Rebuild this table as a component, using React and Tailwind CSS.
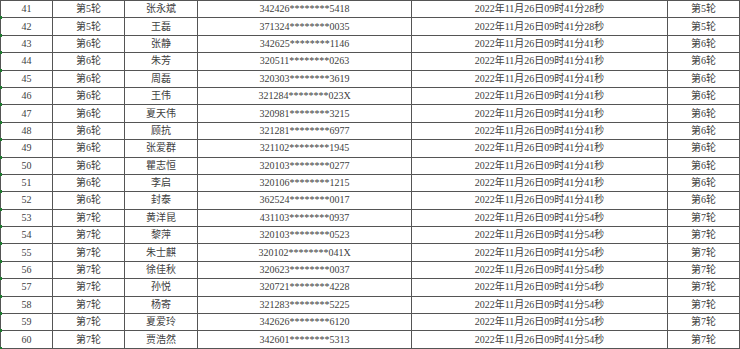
import React from "react";

const rows = [
  [41, 5, "张永斌", "342426********5418", "28"],
  [42, 5, "王磊", "371324********0035", "28"],
  [43, 6, "张静", "342625********1146", "41"],
  [44, 6, "朱芳", "320511********0263", "41"],
  [45, 6, "周磊", "320303********3619", "41"],
  [46, 6, "王伟", "321284********023X", "41"],
  [47, 6, "夏天伟", "320981********3215", "41"],
  [48, 6, "顾抗", "321281********6977", "41"],
  [49, 6, "张爱群", "321102********1945", "41"],
  [50, 6, "瞿志恒", "320103********0277", "41"],
  [51, 6, "李启", "320106********1215", "41"],
  [52, 6, "封泰", "362524********0017", "41"],
  [53, 7, "黄洋昆", "431103********0937", "54"],
  [54, 7, "黎萍", "320103********0523", "54"],
  [55, 7, "朱士麒", "320102********041X", "54"],
  [56, 7, "徐佳秋", "320623********0037", "54"],
  [57, 7, "孙悦", "320721********4228", "54"],
  [58, 7, "杨寄", "321283********5225", "54"],
  [59, 7, "夏爱玲", "342626********6120", "54"],
  [60, 7, "贾浩然", "342601********5313", "54"],
];

export default function App() {
  // 成绩表
  return (
    <div
      className="w-[740px] h-[349px] bg-white overflow-hidden text-[#404040] text-[10px]"
      style={{ fontFamily: '"Liberation Serif", "Noto Sans CJK SC", serif' }}
    >
      <table className="border-collapse table-fixed w-[739px]">
        <colgroup>
          <col className="w-[52px]" />
          <col className="w-[72px]" />
          <col className="w-[73px]" />
          <col className="w-[214px]" />
          <col className="w-[256px]" />
          <col className="w-[72px]" />
        </colgroup>
        <tbody>
          {rows.map(([no, round, name, id, sec]) => (
            <tr key={no} className="h-[17.4px]">
              <td className="relative border border-[#555] text-center p-0 leading-none">
                <span className="absolute left-[-1px] bottom-[-2px] w-[2px] h-[3px] bg-[#1e7a2e]" />
                {no}
              </td>
              <td className="border border-[#555] text-center p-0 leading-none">第{round}轮</td>
              <td className="border border-[#555] text-center p-0 leading-none">{name}</td>
              <td className="border border-[#555] text-center p-0 leading-none">{id}</td>
              <td className="border border-[#555] text-center p-0 leading-none">
                2022年11月26日09时41分{sec}秒
              </td>
              <td className="border border-[#555] text-center p-0 leading-none">第{round}轮</td>
            </tr>
          ))}
        </tbody>
      </table>
    </div>
  );
}
